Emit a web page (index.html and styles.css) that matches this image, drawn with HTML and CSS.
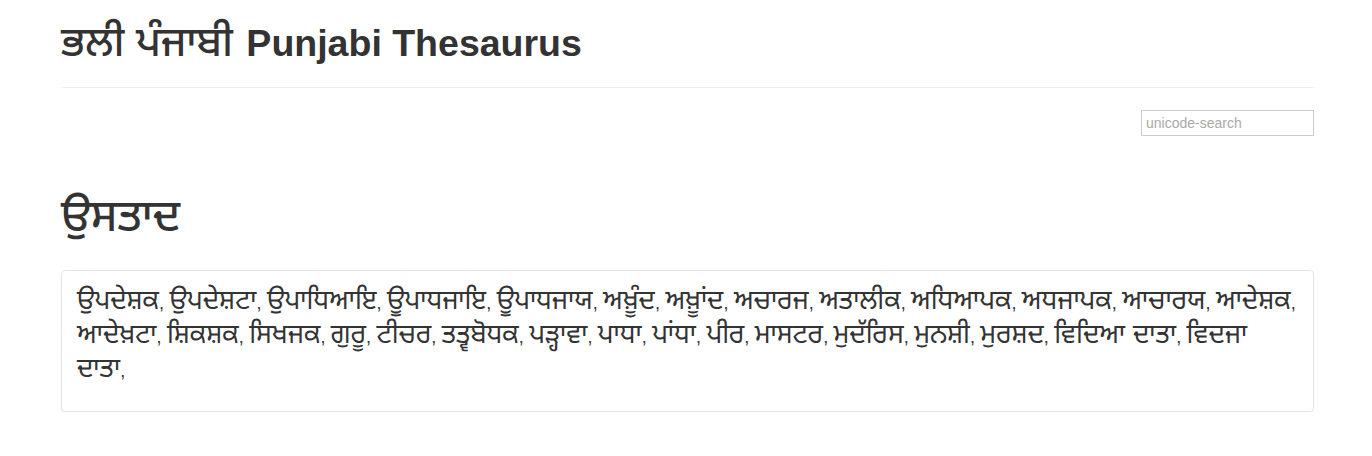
FILE: index.html
```html
<!DOCTYPE html>
<html lang="pa">
<head>
<meta charset="utf-8">
<title>ਭਲੀ ਪੰਜਾਬੀ Punjabi Thesaurus</title>
<link rel="stylesheet" href="styles.css">
</head>
<body>
<div class="container">
  <div class="page-header">
    <h1 class="site-title"><span class="gu">ਭਲੀ ਪੰਜਾਬੀ</span> Punjabi Thesaurus</h1>
  </div>
  <div class="search-row">
    <input class="search" type="text" placeholder="unicode-search">
  </div>
  <h2 class="word">ਉਸਤਾਦ</h2>
  <div class="panel">
    <p class="synonyms"><span class="g">ਉਪਦੇਸ਼ਕ</span>, <span class="g">ਉਪਦੇਸ਼ਟਾ</span>, <span class="g">ਉਪਾਧਿਆਇ</span>, <span class="g">ਊਪਾਧਜਾਇ</span>, <span class="g">ਊਪਾਧਜਾਯ</span>, <span class="g">ਅਖ਼ੂੰਦ</span>, <span class="g">ਅਖ਼ੂਾਂਦ</span>, <span class="g">ਅਚਾਰਜ</span>, <span class="g">ਅਤਾਲੀਕ</span>, <span class="g">ਅਧਿਆਪਕ</span>, <span class="g">ਅਧਜਾਪਕ</span>, <span class="g">ਆਚਾਰਯ</span>, <span class="g">ਆਦੇਸ਼ਕ</span>, <span class="g">ਆਦੇਖ਼ਟਾ</span>, <span class="g">ਸ਼ਿਕਸ਼ਕ</span>, <span class="g">ਸਿਖਜਕ</span>, <span class="g">ਗੁਰੂ</span>, <span class="g">ਟੀਚਰ</span>, <span class="g">ਤਤ੍ਵਬੋਧਕ</span>, <span class="g">ਪੜ੍ਹਾਵਾ</span>, <span class="g">ਪਾਧਾ</span>, <span class="g">ਪਾਂਧਾ</span>, <span class="g">ਪੀਰ</span>, <span class="g">ਮਾਸਟਰ</span>, <span class="g">ਮੁਦੱਰਿਸ</span>, <span class="g">ਮੁਨਸ਼ੀ</span>, <span class="g">ਮੁਰਸ਼ਦ</span>, <span class="g">ਵਿਦਿਆ ਦਾਤਾ</span>, <span class="g">ਵਿਦਜਾ ਦਾਤਾ</span>,</p>
  </div>
</div>
</body>
</html>
```
FILE: styles.css
```css
html, body {
  margin: 0;
  padding: 0;
  background: #fff;
}
body {
  font-family: "Liberation Sans", "Noto Sans Gurmukhi", "Lohit Gurmukhi", "Noto Sans", Arial, sans-serif;
  color: #333;
  font-size: 14px;
  line-height: 1.42857;
}
.container {
  padding: 0 58px 0 61px;
}
.page-header {
  padding-bottom: 9px;
  border-bottom: 1px solid #eee;
  margin: 0;
  padding-top: 22px;
}
.site-title {
  margin: 0;
  font-size: 37.5px;
  font-weight: 700;
  line-height: 40px;
  padding-bottom: 15px;
}
.site-title .gu {
  font-size: 41px;
  font-weight: 500;
  margin-right: 3px;
}
.search-row {
  display: flex;
  justify-content: flex-end;
  margin-top: 22px;
}
.search {
  width: 173px;
  height: 26px;
  box-sizing: border-box;
  border: 1px solid #ccc;
  padding: 2px 4px;
  font-family: "Liberation Sans", Arial, sans-serif;
  font-size: 14px;
  color: #555;
  outline: none;
}
.search::placeholder {
  color: #a9a9a9;
}
.word {
  margin: 58px 0 0;
  font-size: 44px;
  font-weight: 500;
  line-height: 44px;
}
.panel {
  margin-top: 32px;
  border: 1px solid #e3e3e3;
  border-radius: 4px;
  box-shadow: 0 1px 1px rgba(0,0,0,0.05);
  padding: 14px 15px 15px;
  box-sizing: border-box;
  height: 142px;
}
.synonyms {
  margin: 0;
  font-size: 18px;
  line-height: 31px;
  word-spacing: 0.4px;
}
.synonyms .g {
  font-size: 26.5px;
}
```
